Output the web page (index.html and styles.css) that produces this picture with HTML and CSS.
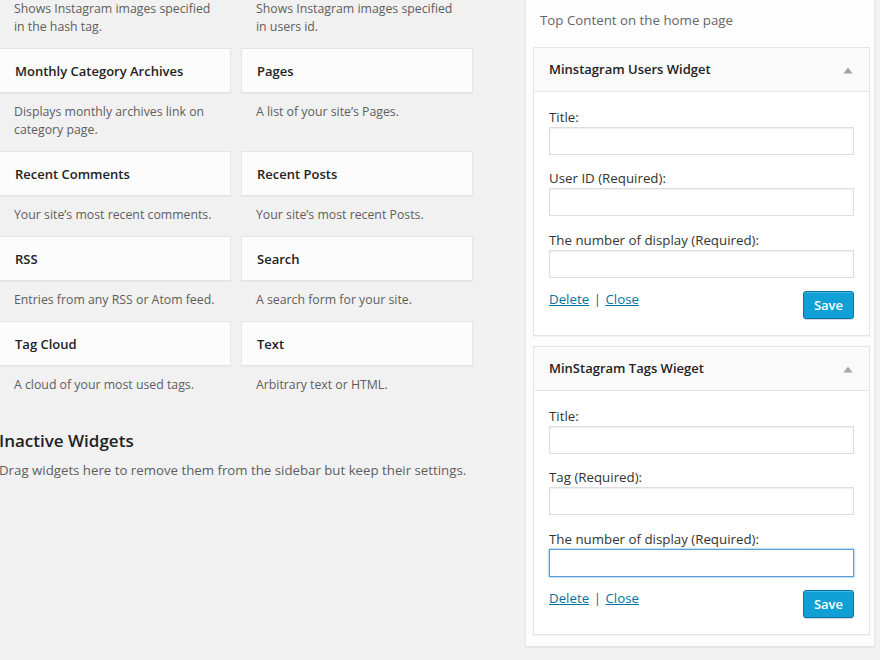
FILE: index.html
```html
<!DOCTYPE html>
<html lang="en">
<head>
<meta charset="utf-8">
<title>Widgets</title>
<link rel="stylesheet" href="styles.css">
</head>
<body>
<div class="page">
  <div class="available">
    <div class="widget-grid">
      <div class="w-item">
        <div class="w-card"><h3 class="w-title">Minstagram Tags Widget</h3></div>
        <p class="w-desc">Shows Instagram images specified in the hash tag.</p>
      </div>
      <div class="w-item">
        <div class="w-card"><h3 class="w-title">Minstagram Users Widget</h3></div>
        <p class="w-desc">Shows Instagram images specified in users id.</p>
      </div>
      <div class="w-item">
        <div class="w-card"><h3 class="w-title">Monthly Category Archives</h3></div>
        <p class="w-desc">Displays monthly archives link on category page.</p>
      </div>
      <div class="w-item">
        <div class="w-card"><h3 class="w-title">Pages</h3></div>
        <p class="w-desc">A list of your site’s Pages.</p>
      </div>
      <div class="w-item">
        <div class="w-card"><h3 class="w-title">Recent Comments</h3></div>
        <p class="w-desc">Your site’s most recent comments.</p>
      </div>
      <div class="w-item">
        <div class="w-card"><h3 class="w-title">Recent Posts</h3></div>
        <p class="w-desc">Your site’s most recent Posts.</p>
      </div>
      <div class="w-item">
        <div class="w-card"><h3 class="w-title">RSS</h3></div>
        <p class="w-desc">Entries from any RSS or Atom feed.</p>
      </div>
      <div class="w-item">
        <div class="w-card"><h3 class="w-title">Search</h3></div>
        <p class="w-desc">A search form for your site.</p>
      </div>
      <div class="w-item">
        <div class="w-card"><h3 class="w-title">Tag Cloud</h3></div>
        <p class="w-desc">A cloud of your most used tags.</p>
      </div>
      <div class="w-item">
        <div class="w-card"><h3 class="w-title">Text</h3></div>
        <p class="w-desc">Arbitrary text or HTML.</p>
      </div>
    </div>
    <h2 class="inactive-title">Inactive Widgets</h2>
    <p class="inactive-desc">Drag widgets here to remove them from the sidebar but keep their settings.</p>
  </div>

  <div class="sidebar">
    <p class="sidebar-desc">Top Content on the home page</p>

    <div class="widget">
      <div class="widget-top">
        <h3 class="widget-title">Minstagram Users Widget</h3>
        <svg class="toggle" width="10" height="7" viewBox="0 0 10 7"><path d="M0.5 6.5 L5 0.5 L9.5 6.5 Z" fill="#a0a5aa"/></svg>
      </div>
      <div class="widget-inside">
        <div class="field">
          <label class="field-label">Title:</label>
          <input class="field-input" type="text">
        </div>
        <div class="field">
          <label class="field-label">User ID (Required):</label>
          <input class="field-input" type="text">
        </div>
        <div class="field">
          <label class="field-label">The number of display (Required):</label>
          <input class="field-input" type="text">
        </div>
        <div class="actions">
          <div class="links"><a class="link" href="#">Delete</a> <span class="sep">|</span> <a class="link" href="#">Close</a></div>
          <button class="btn-primary" type="button">Save</button>
        </div>
      </div>
    </div>

    <div class="widget">
      <div class="widget-top">
        <h3 class="widget-title">MinStagram Tags Wieget</h3>
        <svg class="toggle" width="10" height="7" viewBox="0 0 10 7"><path d="M0.5 6.5 L5 0.5 L9.5 6.5 Z" fill="#a0a5aa"/></svg>
      </div>
      <div class="widget-inside">
        <div class="field">
          <label class="field-label">Title:</label>
          <input class="field-input" type="text">
        </div>
        <div class="field">
          <label class="field-label">Tag (Required):</label>
          <input class="field-input" type="text">
        </div>
        <div class="field">
          <label class="field-label">The number of display (Required):</label>
          <input class="field-input is-focused" type="text">
        </div>
        <div class="actions">
          <div class="links"><a class="link" href="#">Delete</a> <span class="sep">|</span> <a class="link" href="#">Close</a></div>
          <button class="btn-primary" type="button">Save</button>
        </div>
      </div>
    </div>
  </div>
</div>
</body>
</html>
```

FILE: styles.css
```css
* { box-sizing: border-box; }

html, body {
  margin: 0;
  padding: 0;
  background: #f1f1f1;
  overflow: hidden;
}

body {
  font-family: "Open Sans", "Noto Sans", sans-serif;
  font-size: 13px;
  line-height: 18px;
  color: #444;
  width: 880px;
  height: 660px;
}

.page {
  display: flex;
  align-items: flex-start;
  gap: 52px;
}

/* ---------- available widgets ---------- */
.available {
  width: 474px;
  margin-left: -1px;
  margin-top: -55px;
  flex: none;
}

.widget-grid {
  display: grid;
  grid-template-columns: 232px 232px;
  column-gap: 10px;
}

.w-card {
  height: 45px;
  background: #fcfcfc;
  border: 1px solid #e5e5e5;
  box-shadow: 0 1px 1px rgba(0, 0, 0, 0.04);
  padding: 13px 15px 12px;
}

.w-title {
  margin: 0;
  font-size: 13px;
  line-height: 18px;
  font-weight: 600;
  color: #222;
}

.w-desc {
  margin: 0;
  padding: 10px 10px 12px 15px;
  font-size: 12.3px;
  line-height: 18px;
  color: #5e5e5e;
}

.inactive-title {
  margin: 23px 0 8px;
  font-size: 17px;
  line-height: 24px;
  font-weight: 600;
  color: #222;
}

.inactive-desc {
  margin: 0;
  font-size: 13.25px;
  color: #5e5e5e;
}

/* ---------- sidebar ---------- */
.sidebar {
  width: 350px;
  flex: none;
  margin-top: -10px;
  background: #fdfdfd;
  border: 1px solid #e5e5e5;
  padding: 20px 4px 11px 7px;
  box-shadow: 0 1px 1px rgba(0, 0, 0, 0.04);
}

.sidebar-desc {
  margin: 0 0 18px 7px;
  font-size: 13.3px;
  color: #666;
}

.widget {
  background: #fff;
  border: 1px solid #e5e5e5;
  box-shadow: 0 1px 1px rgba(0, 0, 0, 0.04);
}

.widget + .widget {
  margin-top: 10px;
}

.widget-top {
  display: flex;
  align-items: center;
  justify-content: space-between;
  background: #fafafa;
  border-bottom: 1px solid #e5e5e5;
  padding: 12px 16px 13px 15px;
}

.widget-title {
  margin: 0;
  font-size: 13px;
  line-height: 18px;
  font-weight: 600;
  color: #222;
}

.toggle {
  display: block;
  margin-top: 2px;
}

.widget-inside {
  padding: 16px 15px 16px;
}

.field + .field {
  margin-top: 14px;
}

.field:nth-child(3) {
  margin-top: 15px;
}

.field-label {
  display: block;
  font-size: 13.3px;
  line-height: 18px;
  margin-bottom: 1px;
  color: #333;
}

.field-input {
  display: block;
  width: 100%;
  height: 28px;
  margin: 0;
  padding: 3px 5px;
  border: 1px solid #ddd;
  background: #fff;
  box-shadow: inset 0 1px 2px rgba(0, 0, 0, 0.07);
  font-family: inherit;
  font-size: 13px;
  color: #333;
  outline: none;
}

.field-input.is-focused {
  border-color: #5b9dd9;
  box-shadow: 0 0 2px rgba(30, 140, 190, 0.8);
}

.actions {
  display: flex;
  justify-content: space-between;
  align-items: flex-start;
  margin-top: 13px;
}

.links {
  font-size: 13.3px;
  line-height: 18px;
  margin-top: -1px;
  color: #666;
}

.link {
  color: #0074a2;
  text-decoration: underline;
}

.sep {
  color: #555;
  margin: 0 1px;
}

.btn-primary {
  height: 28px;
  padding: 0 10px;
  margin: 0;
  font-family: inherit;
  font-size: 13px;
  font-weight: 600;
  line-height: 26px;
  color: #fff;
  background: #10a0d5;
  border: 1px solid #0075a8;
  border-radius: 3px;
  box-shadow: inset 0 1px 0 rgba(120, 200, 230, 0.5), 0 1px 0 rgba(0, 0, 0, 0.15);
  cursor: pointer;
}
```
